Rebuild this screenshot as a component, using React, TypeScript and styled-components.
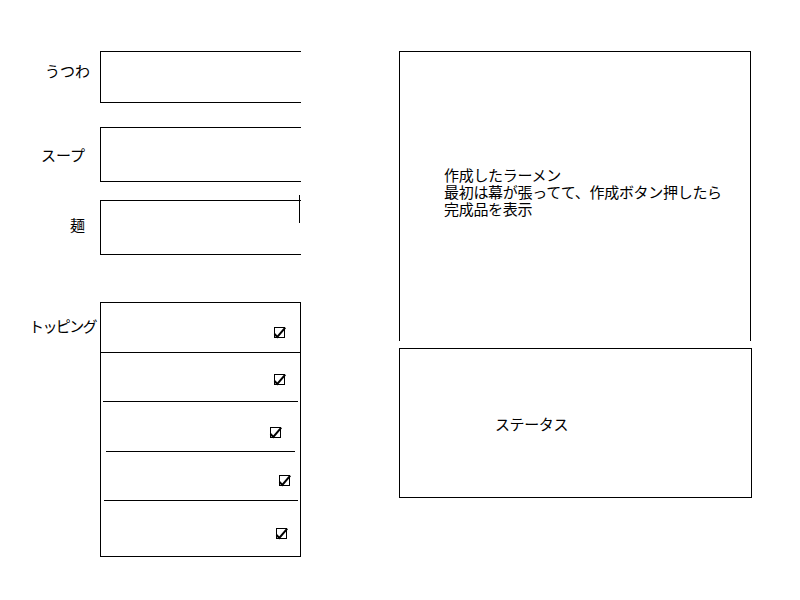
import React from "react";
import styled, { createGlobalStyle } from "styled-components";

const GlobalStyle = createGlobalStyle`
  html, body {
    margin: 0;
    padding: 0;
    background: #ffffff;
  }
  body {
    font-family: "Noto Sans CJK JP", "Noto Sans", sans-serif;
    color: #000000;
  }
  * { box-sizing: border-box; }
`;

const Page = styled.div`
  display: flex;
  align-items: flex-start;
  gap: 99px;
  width: 800px;
  height: 600px;
  padding-top: 51px;
`;

const LeftColumn = styled.div`
  display: flex;
  flex-direction: column;
  width: 300px;
`;

const FieldRow = styled.div<{ $mt: number }>`
  display: grid;
  grid-template-columns: 100px 201px;
  margin-top: ${(p) => p.$mt}px;
`;

const Label = styled.div<{ $top: number; $right: number; $ls?: number }>`
  align-self: start;
  text-align: right;
  font-size: 15px;
  line-height: 17px;
  letter-spacing: ${(p) => p.$ls ?? 0}px;
  padding-top: ${(p) => p.$top}px;
  padding-right: ${(p) => p.$right}px;
  white-space: nowrap;
`;

const InputBox = styled.div<{ $h: number; $tick?: boolean }>`
  position: relative;
  height: ${(p) => p.$h}px;
  border-top: 1px solid #000;
  border-bottom: 1px solid #000;
  border-left: 1px solid #000;
  &::after {
    content: "";
    display: ${(p) => (p.$tick ? "block" : "none")};
    position: absolute;
    right: 1px;
    top: -6px;
    width: 1px;
    height: 28px;
    background: #000;
  }
`;

const ToppingBox = styled.div`
  display: flex;
  flex-direction: column;
  height: 255px;
  border: 1px solid #000;
`;

const ToppingRow = styled.div<{ $h: number; $top: number; $right: number }>`
  display: flex;
  justify-content: flex-end;
  align-items: flex-start;
  height: ${(p) => p.$h}px;
  padding-top: ${(p) => p.$top}px;
  padding-right: ${(p) => p.$right}px;
  flex-shrink: 0;
`;

const Divider = styled.div<{ $l: number; $r: number }>`
  height: 1px;
  background: #000;
  margin-left: ${(p) => p.$l}px;
  margin-right: ${(p) => p.$r}px;
  flex-shrink: 0;
`;

const RightColumn = styled.div`
  display: flex;
  flex-direction: column;
  width: 353px;
`;

const PreviewBox = styled.div`
  width: 352px;
  height: 290px;
  border-top: 1px solid #000;
  border-left: 1px solid #000;
  border-right: 1px solid #000;
  padding: 114px 0 0 44px;
  font-size: 15px;
  line-height: 17px;
  letter-spacing: -0.3px;
  white-space: nowrap;
`;

const StatusBox = styled.div`
  width: 353px;
  height: 150px;
  margin-top: 7px;
  border: 1px solid #000;
  padding: 66px 0 0 95px;
  font-size: 15px;
  line-height: 17px;
  letter-spacing: -0.4px;
`;

const CheckIcon = () => (
  <svg width="13" height="13" viewBox="0 0 13 13" aria-hidden="true">
    <rect x="1.5" y="1.5" width="10" height="10" fill="none" stroke="#000" strokeWidth="1" />
    <path d="M2.2 8.6 L4.3 11 L11.6 2.4" fill="none" stroke="#000" strokeWidth="2" strokeLinecap="square" />
  </svg>
);

const toppings = [
  { h: 49, top: 23, right: 14 },
  { h: 48, top: 20, right: 14 },
  { h: 49, top: 24, right: 18 },
  { h: 48, top: 22, right: 9 },
  { h: 55, top: 26, right: 12 },
];

const dividers = [
  { l: 0, r: 0 },
  { l: 2, r: 2 },
  { l: 5, r: 5 },
  { l: 3, r: 2 },
];

export default function App() {
  return (
    <>
      <GlobalStyle />
      <Page>
        <LeftColumn>
          <FieldRow $mt={0}>
            <Label $top={11} $right={10}>うつわ</Label>
            <InputBox $h={52} />
          </FieldRow>
          <FieldRow $mt={24}>
            <Label $top={19} $right={15}>スープ</Label>
            <InputBox $h={55} />
          </FieldRow>
          <FieldRow $mt={18}>
            <Label $top={16} $right={15}>麺</Label>
            <InputBox $h={55} $tick />
          </FieldRow>
          <FieldRow $mt={47}>
            <Label $top={15} $right={4} $ls={-1.6}>トッピング</Label>
            <ToppingBox>
              {toppings.map((t, i) => (
                <React.Fragment key={i}>
                  <ToppingRow $h={t.h} $top={t.top} $right={t.right}>
                    <CheckIcon />
                  </ToppingRow>
                  {i < dividers.length && <Divider $l={dividers[i].l} $r={dividers[i].r} />}
                </React.Fragment>
              ))}
            </ToppingBox>
          </FieldRow>
        </LeftColumn>
        <RightColumn>
          <PreviewBox>
            作成したラーメン
            <br />
            最初は幕が張ってて、作成ボタン押したら
            <br />
            完成品を表示
          </PreviewBox>
          <StatusBox>ステータス</StatusBox>
        </RightColumn>
      </Page>
    </>
  );
}
